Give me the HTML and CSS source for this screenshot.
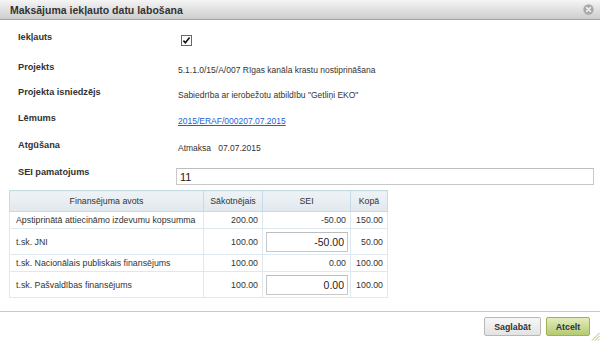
FILE: index.html
```html
<!DOCTYPE html>
<html lang="lv">
<head>
<meta charset="utf-8">
<title>Maksājuma iekļauto datu labošana</title>
<link rel="stylesheet" href="styles.css">
</head>
<body>
<div class="dialog">
  <div class="titlebar">
    <span class="title">Maksājuma iekļauto datu labošana</span>
    <span class="close"><svg width="11" height="11" viewBox="0 0 11 11"><circle cx="5.5" cy="5.5" r="5.2" fill="#a9a9a9"/><path d="M3.6 3.6 L7.4 7.4 M7.4 3.6 L3.6 7.4" stroke="#eeeeee" stroke-width="1.5" stroke-linecap="round"/></svg></span>
  </div>
  <div class="content">
    <div class="form">
      <div class="lbl">Iekļauts</div>
      <div class="val"><span class="check"><svg width="11" height="11" viewBox="0 0 11 11"><rect x="0.5" y="0.5" width="10" height="10" fill="#fff" stroke="#666"/><path d="M2.4 5.6 L4.4 7.8 L8.6 2.6" fill="none" stroke="#111" stroke-width="1.6"/></svg></span></div>
      <div class="lbl">Projekts</div>
      <div class="val txt">5.1.1.0/15/A/007 Rīgas kanāla krastu nostiprināšana</div>
      <div class="lbl">Projekta isniedzējs</div>
      <div class="val txt">Sabiedrība ar ierobežotu atbildību "Getliņi EKO"</div>
      <div class="lbl">Lēmums</div>
      <div class="val txt"><a class="link" href="#">2015/ERAF/000207.07.2015</a></div>
      <div class="lbl">Atgūšana</div>
      <div class="val txt">Atmaksa&nbsp;&nbsp;&nbsp;07.07.2015</div>
      <div class="lbl">SEI pamatojums</div>
      <div class="val"><input class="inp wide" type="text" value="11"></div>
    </div>
    <table class="fin">
      <colgroup><col class="c1"><col class="c2"><col class="c3"><col class="c4"></colgroup>
      <thead>
        <tr><th>Finansējuma avots</th><th>Sākotnējais</th><th>SEI</th><th>Kopā</th></tr>
      </thead>
      <tbody>
        <tr class="r-short"><td class="name">Apstiprinātā attiecināmo izdevumu kopsumma</td><td class="num">200.00</td><td class="num">-50.00</td><td class="num">150.00</td></tr>
        <tr class="r-tall"><td class="name">t.sk. JNI</td><td class="num">100.00</td><td class="cell-inp"><input class="inp small" type="text" value="-50.00"></td><td class="num">50.00</td></tr>
        <tr class="r-short"><td class="name">t.sk. Nacionālais publiskais finansējums</td><td class="num">100.00</td><td class="num">0.00</td><td class="num">100.00</td></tr>
        <tr class="r-tall"><td class="name">t.sk. Pašvaldības finansējums</td><td class="num">100.00</td><td class="cell-inp"><input class="inp small" type="text" value="0.00"></td><td class="num">100.00</td></tr>
      </tbody>
    </table>
  </div>
  <div class="footer">
    <button class="btn save" type="button">Saglabāt</button>
    <button class="btn cancel" type="button">Atcelt</button>
  </div>
  <span class="grip"><svg width="10" height="10" viewBox="0 0 10 10"><path d="M9.5 2 L2 9.5 M9.5 5 L5 9.5 M9.5 8 L8 9.5" stroke="#a9c26a" stroke-width="1"/></svg></span>
</div>
</body>
</html>
```
FILE: styles.css
```css
* { box-sizing: border-box; }
html, body { margin: 0; padding: 0; background: #fff; }
body { font-family: "Liberation Sans", Arial, sans-serif; color: #333; }

.dialog {
  position: relative;
  width: 600px;
  height: 341px;
  display: flex;
  flex-direction: column;
  background: #fff;
}

.titlebar {
  height: 20px;
  display: flex;
  align-items: center;
  justify-content: space-between;
  padding: 0 4px 0 10px;
  background: linear-gradient(#f5f5f5, #cdcdcd);
  border-bottom: 1px solid #a3a3a3;
}
.title { font-size: 10.5px; font-weight: bold; color: #333; }
.close { display: flex; width: 11px; height: 11px; margin-right: 2px; }

.content { flex: 1; }

.form {
  display: grid;
  grid-template-columns: 158px 1fr;
  grid-template-rows: 30px 25px 26px 27px 27px 22px;
  padding: 11px 6px 0 18px;
}
.lbl { font-size: 9.2px; font-weight: bold; line-height: 12px; color: #333; }
.val { font-size: 8.5px; line-height: 12px; }
.val.txt { padding: 3px 0 0 2px; }
.check { display: flex; width: 11px; height: 11px; margin: 4px 0 0 5px; }
.link { color: #1f5fcf; text-decoration: underline; }

.inp {
  font-family: "Liberation Sans", Arial, sans-serif;
  color: #222;
  border: 1px solid #c8c8c8;
  border-top-color: #bdbdbd;
  background: #fff;
  outline: none;
  margin: 0;
}
.inp.wide {
  width: 418px;
  height: 17px;
  margin-top: 2px;
  padding: 0 3px;
  font-size: 11px;
}
.inp.small {
  width: 82px;
  height: 20px;
  padding: 0 3px;
  font-size: 10.5px;
  text-align: right;
  display: block;
}

.fin {
  margin: 2px 0 0 9px;
  width: 378px;
  border-collapse: collapse;
  table-layout: fixed;
  font-size: 8.8px;
  color: #333;
}
.c1 { width: 194px; }
.c2 { width: 59px; }
.c3 { width: 88px; }
.c4 { width: 37px; }
.fin th {
  height: 21px;
  font-weight: normal;
  background: linear-gradient(#eef3f6, #e1e9ee);
  border: 1px solid #c5dce4;
  padding: 0;
  text-align: center;
}
.fin td {
  border: 1px solid #dde9ee;
  padding: 0 5px;
}
.r-short td { height: 17px; }
.r-tall td { height: 26px; }
.fin td.name { padding-left: 6px; }
.fin td.num { text-align: right; padding-right: 4px; }
.fin td.cell-inp { padding: 0 3px 0 3px; }

.footer {
  height: 30px;
  border-top: 1px solid #c9c9c9;
  display: flex;
  justify-content: flex-end;
  align-items: flex-start;
  gap: 5px;
  padding: 5px 10px 0 0;
}
.btn {
  height: 19px;
  font-family: "Liberation Sans", Arial, sans-serif;
  font-size: 8.8px;
  font-weight: bold;
  border-radius: 2px;
  padding: 0;
  margin: 0;
  cursor: pointer;
}
.save {
  width: 57px;
  color: #333;
  background: linear-gradient(#f7f7f7, #e3e3e3);
  border: 1px solid #b8b8b8;
}
.cancel {
  width: 44px;
  color: #243548;
  background: linear-gradient(#e3edbc, #b4ca72);
  border: 1px solid #9db257;
}
.grip {
  position: absolute;
  right: 0;
  bottom: 0;
  width: 10px;
  height: 10px;
  display: flex;
}
```
